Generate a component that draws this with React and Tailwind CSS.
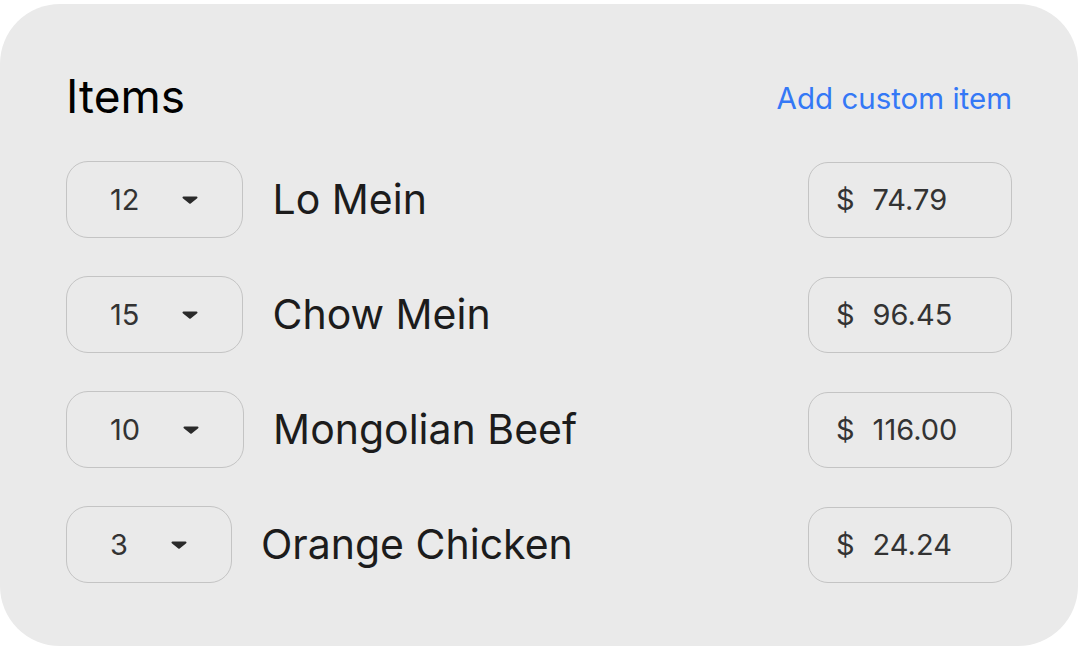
const items = [
    { qty: 12, name: 'Lo Mein', price: '74.79' },
    { qty: 15, name: 'Chow Mein', price: '96.45' },
    { qty: 10, name: 'Mongolian Beef', price: '116.00' },
    { qty: 3, name: 'Orange Chicken', price: '24.24' }
];

const Caret = () => (
    <svg width="16" height="8" viewBox="0 0 16 8" className="text-[#2a2a2a]">
        <path d="M1.5 0.5h13a1 1 0 0 1 .7 1.7l-6.5 5.3a1 1 0 0 1-1.4 0L0.8 2.2a1 1 0 0 1 .7-1.7z" fill="currentColor" />
    </svg>
);

const ItemRow = ({ item }) => (
    <div className="flex h-[77px] items-center">
        <div className="flex h-full items-center gap-[43px] rounded-[22px] border border-[#c4c4c4] pl-[43px] pr-[44px]">
            <span className="text-[29px] text-[#333]">{item.qty}</span>
            <Caret />
        </div>
        <span className="ml-[29px] text-[41px] text-[#1c1c1c]">{item.name}</span>
        <div className="ml-auto flex h-[76px] w-[204px] items-center rounded-[20px] border border-[#c4c4c4] pl-[27px] text-[29px] text-[#333]">
            <span>$</span>
            <span className="ml-[18px]">{item.price}</span>
        </div>
    </div>
);

const App = () => {
    return (
        <div className="h-[650px] w-[1080px] bg-white pt-[4px] font-['Inter',sans-serif]">
            <div className="flex h-[642px] w-[1078px] flex-col rounded-[60px] bg-[#eaeaea] px-[66px] pt-[69px]">
                <div className="flex items-start justify-between">
                    <h1 className="text-[46px] leading-none text-black">Items</h1>
                    <button className="mt-[11px] text-[29.5px] leading-none text-[#3478f6]">
                        Add custom item
                    </button>
                </div>
                <div className="mt-[42px] flex flex-col gap-[38px]">
                    {items.map((item) => (
                        <ItemRow key={item.name} item={item} />
                    ))}
                </div>
            </div>
        </div>
    );
};

export default App;
